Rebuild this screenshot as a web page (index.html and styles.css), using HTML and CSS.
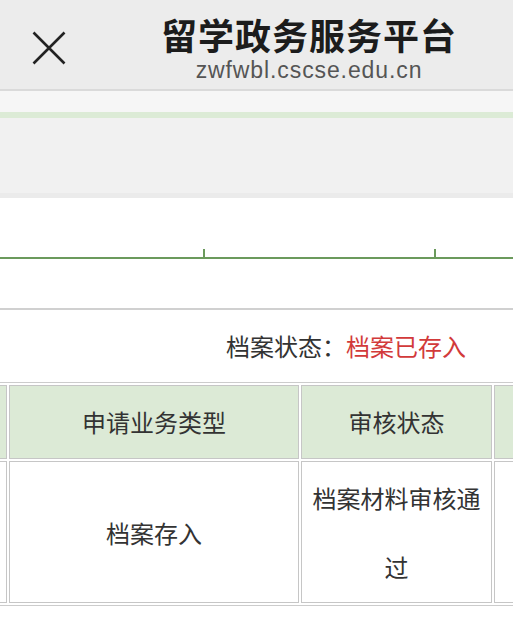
FILE: index.html
```html
<!DOCTYPE html>
<html lang="zh-CN">
<head>
<meta charset="utf-8">
<title>留学政务服务平台</title>
<link rel="stylesheet" href="styles.css">
</head>
<body>
<header class="header">
  <div class="close">
    <svg width="34" height="34" viewBox="0 0 34 34" aria-hidden="true">
      <path d="M1.5 1.5 L32.5 32.5 M32.5 1.5 L1.5 32.5" stroke="#222" stroke-width="2.6" stroke-linecap="butt" fill="none"/>
    </svg>
  </div>
  <div class="titles">
    <div class="title">留学政务服务平台</div>
    <div class="url">zwfwbl.cscse.edu.cn</div>
  </div>
</header>
<div class="band-light"></div>
<div class="band-green"></div>
<div class="band-grey"></div>
<div class="band-grey-dark"></div>
<section class="progress">
  <div class="track">
    <span class="gap g1"></span><span class="tick"></span><span class="gap g2"></span><span class="tick"></span><span class="gap g3"></span>
  </div>
</section>
<section class="status">
  <span class="label">档案状态：</span><span class="value">档案已存入</span>
</section>
<div class="table-wrap">
  <table class="records">
    <thead>
      <tr>
        <th class="c1"></th>
        <th class="c2">申请业务类型</th>
        <th class="c3">审核状态</th>
        <th class="c4"></th>
      </tr>
    </thead>
    <tbody>
      <tr>
        <td class="c1"></td>
        <td class="c2">档案存入</td>
        <td class="c3">档案材料审核通过</td>
        <td class="c4"></td>
      </tr>
    </tbody>
  </table>
</div>
</body>
</html>
```
FILE: styles.css
```css
html, body {
  margin: 0;
  padding: 0;
  background: #ffffff;
  font-family: "Noto Sans CJK SC", "Noto Sans", sans-serif;
  color: #333333;
  width: 513px;
  overflow: hidden;
}

.header {
  height: 89px;
  background: #ececec;
  border-bottom: 2px solid #dadada;
  display: flex;
  align-items: flex-start;
}

.close {
  width: 34px;
  height: 34px;
  margin-left: 32px;
  margin-top: 31px;
}

.close svg {
  display: block;
}

.titles {
  width: 340px;
  margin-left: 73px;
  display: flex;
  flex-direction: column;
  align-items: center;
  padding-top: 15px;
}

.title {
  font-size: 36px;
  line-height: 38px;
  font-weight: 700;
  letter-spacing: 1px;
  color: #1c1c1c;
  white-space: nowrap;
}

.url {
  font-family: "Liberation Sans", Arial, sans-serif;
  font-size: 23px;
  line-height: 26px;
  letter-spacing: 0.9px;
  color: #555555;
  margin-top: 4px;
  white-space: nowrap;
}

.band-light {
  height: 21px;
  background: #f6f6f6;
}

.band-green {
  height: 6px;
  background: #dcebd6;
}

.band-grey {
  height: 75px;
  background: #f1f1f1;
}

.band-grey-dark {
  height: 5px;
  background: #ebebeb;
}

.progress {
  height: 112px;
  border-bottom: 2px solid #d0d0d0;
  padding-top: 51px;
  box-sizing: border-box;
}

.track {
  display: flex;
  align-items: flex-end;
  height: 8px;
  border-bottom: 2px solid #6b9a5c;
}

.gap {
  display: block;
}

.g1 { width: 203px; }
.g2 { width: 229px; }
.g3 { flex: 1; }

.tick {
  display: block;
  width: 2px;
  height: 8px;
  background: #6b9a5c;
}

.status {
  height: 72px;
  display: flex;
  align-items: center;
  justify-content: flex-end;
  padding-right: 47px;
  font-size: 24px;
  line-height: 30px;
}

.label {
  color: #333333;
}

.value {
  color: #d23a3a;
}

.table-wrap {
  overflow: hidden;
  width: 513px;
}

.records {
  margin-left: -116px;
  border-collapse: separate;
  border-spacing: 2px;
  border: 1px solid #cccccc;
  table-layout: fixed;
  width: 900px;
}

.records th,
.records td {
  border: 1px solid #c6c6c6;
  padding: 1px 8px;
  font-size: 24px;
  line-height: 70px;
  font-weight: 400;
  text-align: center;
  vertical-align: middle;
  color: #333333;
  box-sizing: border-box;
}

.records td {
  line-height: 69px;
  background: #ffffff;
}

.records th {
  background: #dcead6;
}

.records .c1 { width: 120px; }
.records .c2 { width: 290px; }
.records .c3 { width: 191px; }
.records .c4 { width: 289px; }
```
